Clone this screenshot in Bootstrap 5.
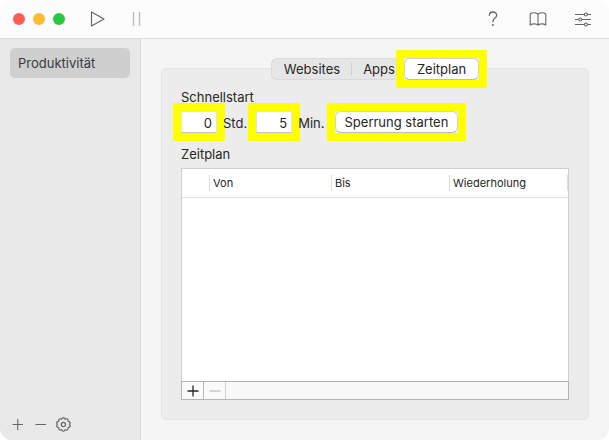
<!DOCTYPE html>
<html lang="de">
<head>
<meta charset="utf-8">
<meta name="viewport" content="width=device-width, initial-scale=1">
<title>Produktivität</title>
<link href="https://cdn.jsdelivr.net/npm/bootstrap@5.3.0/dist/css/bootstrap.min.css" rel="stylesheet">
<style>
body { font-family: Inter, "Liberation Sans", sans-serif; font-size: 13px; line-height: 18px; color: #262626; background: #fff; }
button { font: inherit; color: inherit; }
.app-window { border-radius: 12px; background: #f5f5f5; }
.toolbar { height: 39px; background: #fcfcfc; border-bottom: 1px solid #dcdcdc; padding: 0 17px 0 13px; }
.toolbar-end { gap: 27px; }
.light { width: 12px; height: 12px; border-radius: 50%; }
.light-close { background: #ff5f57; }
.light-min { background: #febc2e; }
.light-max { background: #28c840; }
.icon-btn { background: none; border: 0; padding: 0; color: #666; display: flex; }
.sidebar { width: 141px; background: #e8e8e8; border-right: 1px solid #d8d8d8; padding: 9px 10px 8px; }
.side-item { height: 30px; border-radius: 5px; background: #cfcfcf; color: #3a3a3a; padding: 6px 8px; text-decoration: none; }
.content-pane { padding: 29px 20px 20px; }
.group-box { background: #ececec; border: 1px solid #e4e4e4; border-radius: 5px; padding: 0 19px 19px; }
.segments { height: 22px; margin-top: -11px; border-radius: 6px; background: #e6e6e6; box-shadow: inset 0 0 0 1px #dadada; }
.segment { border: 0; background: none; padding: 0 11px 0 13px; height: 22px; line-height: 20px; }
.segment-apps { padding: 0 9px 0 11px; }
.divider { width: 1px; height: 12px; background: #cfcfcf; }
.marked { display: flex; background: #ececec; box-shadow: 0 0 0 8px #ff0; }
.raised { border: 1px solid #d2d2d2; border-bottom-color: #bdbdbd; border-radius: 6px; background: #fff; height: 22px; line-height: 19px; padding: 0 12px; }
.raised-start { padding: 0 9px; }
.num { width: 36px; height: 22px; border: 1px solid #e3e3e3; border-bottom-color: #c4c4c4; background: #fff; text-align: right; padding: 2px 4px 0 0; font: inherit; color: inherit; border-radius: 0; }
.start-row { height: 22px; margin-top: 5px; }
.unit { margin-left: 6px; margin-right: 9px; padding-top: 2px; }
.unit-min { margin-right: 10px; }
.schedule { margin-top: 5px; background: #fff; border: 1px solid #d0d0d0; border-bottom: 0; }
.head-table { width: 100%; table-layout: fixed; font-size: 11px; line-height: 16px; }
.head-table th { font-weight: 400; height: 28px; padding: 0; border-bottom: 1px solid #e2e2e2; }
.head-table th span { display: block; height: 16px; border-right: 1px solid #dedede; padding-left: 3px; }
.c-mark { width: 28px; } .c-bis { width: 118px; } .c-rep { width: 118px; } .c-von { width: auto; }
.list-tools { height: 19px; border: 1px solid #b4b4b4; background: #f8f8f8; }
.tool-btn { width: 22px; border: 0; border-right: 1px solid #b9b9b9; background: #fafafa; padding: 0; display: flex; align-items: center; justify-content: center; }
.tool-btn:disabled { color: #b0b0b0; border-right-color: #d0d0d0; }
</style>
<script src="https://cdn.jsdelivr.net/npm/bootstrap@5.3.0/dist/js/bootstrap.bundle.min.js" defer></script>
</head>
<body>
<div class="app-window d-flex flex-column min-vh-100 overflow-hidden">
  <header class="toolbar d-flex align-items-center">
    <div class="d-flex gap-2">
      <span class="light light-close"></span><span class="light light-min"></span><span class="light light-max"></span>
    </div>
    <div class="d-flex align-items-center ms-4 gap-4">
      <button class="icon-btn" type="button" aria-label="Start"><svg width="18" height="18" viewBox="0 0 18 18" fill="none" stroke="currentColor" stroke-width="1.2" stroke-linejoin="round"><path d="M2.500 2 L15 9 L2.500 16Z"/></svg></button>
      <button class="icon-btn" type="button" aria-label="Pause"><svg width="14" height="18" viewBox="0 0 14 18" stroke="#bcbcbc" stroke-width="1.4"><path d="M2.500 2V16M8.500 2V16"/></svg></button>
    </div>
    <div class="toolbar-end d-flex align-items-center ms-auto">
      <button class="icon-btn" type="button" aria-label="Hilfe"><svg width="18" height="18" viewBox="0 0 18 18" fill="none" stroke="currentColor" stroke-width="1.3" stroke-linecap="round"><path d="M5.300 5.200C5.400 3.200 6.900 2 9 2C11.300 2 12.700 3.300 12.700 5.200C12.700 8.200 8.900 8 8.900 11.500"/><circle cx="8.900" cy="15" r="1" fill="currentColor" stroke="none"/></svg></button>
      <button class="icon-btn" type="button" aria-label="Handbuch"><svg width="18" height="18" viewBox="0 0 18 18" fill="none" stroke="currentColor" stroke-width="1.1" stroke-linejoin="round"><path d="M9 4.500C8.200 2.200 3 2.200 1.200 4V15C3.200 13.500 7.700 13.500 9 15.200C10.300 13.500 14.800 13.500 16.800 15V4C15 2.200 9.800 2.200 9 4.500ZV15"/></svg></button>
      <button class="icon-btn" type="button" aria-label="Einstellungen"><svg width="18" height="18" viewBox="0 0 18 18" fill="none" stroke="currentColor" stroke-width="1.1"><path d="M1 4.500H10.300M13.500 4.500H17M1 9.500H4.700M7.900 9.500H17M1 14.500H10.300M13.500 14.500H17"/><circle cx="11.900" cy="4.500" r="1.500"/><circle cx="6.300" cy="9.500" r="1.500"/><circle cx="11.900" cy="14.500" r="1.500"/></svg></button>
    </div>
  </header>
  <div class="d-flex flex-grow-1">
    <nav class="sidebar d-flex flex-column flex-shrink-0">
      <a class="side-item" href="#">Produktivität</a>
      <div class="d-flex mt-auto gap-2">
        <button class="icon-btn" type="button" aria-label="Hinzufügen"><svg width="15" height="16" viewBox="0 0 15 16" stroke="currentColor" stroke-width="1.1"><path d="M2.500 8.500H13M7.750 3V14"/></svg></button>
        <button class="icon-btn" type="button" aria-label="Entfernen"><svg width="15" height="16" viewBox="0 0 15 16" stroke="currentColor" stroke-width="1.100"><path d="M2.500 8.500H13"/></svg></button>
        <button class="icon-btn" type="button" aria-label="Optionen"><svg width="16" height="16" viewBox="0 0 16 16" fill="none" stroke="currentColor" stroke-width="1.2" stroke-linejoin="round"><g transform="translate(-.6 .4)"><path d="M6.300 2.700Q8 -.4 9.700 2.700Q12.900 1.500 12.600 4.700Q16 5.500 14 8Q16 10.500 12.600 11.300Q12.900 14.500 9.700 13.300Q8 16.400 6.300 13.300Q3.100 14.500 3.400 11.300Q0 10.500 2 8Q0 5.500 3.400 4.700Q3.100 1.500 6.300 2.700Z"/><circle cx="8" cy="8" r="2.100"/></g></svg></button>
      </div>
    </nav>
    <main class="content-pane d-flex flex-column flex-grow-1">
      <section class="group-box d-flex flex-column flex-grow-1">
        <div class="segments d-flex align-items-center align-self-center" role="tablist">
          <button class="segment" type="button" role="tab">Websites</button>
          <span class="divider"></span>
          <button class="segment segment-apps" type="button" role="tab">Apps</button>
          <span class="marked"><button class="raised" type="button" role="tab" aria-selected="true">Zeitplan</button></span>
        </div>
        <div class="mt-2">Schnellstart</div>
        <div class="start-row d-flex align-items-center">
          <span class="marked"><input class="num" id="hours" type="text" value="0"></span>
          <label class="unit" for="hours">Std.</label>
          <span class="marked"><input class="num" id="minutes" type="text" value="5"></span>
          <label class="unit unit-min" for="minutes">Min.</label>
          <span class="marked"><button class="raised raised-start" type="button">Sperrung starten</button></span>
        </div>
        <div class="mt-2 pt-1">Zeitplan</div>
        <div class="schedule flex-grow-1">
          <table class="head-table">
            <thead><tr>
              <th class="c-mark"><span></span></th>
              <th class="c-von"><span>Von</span></th>
              <th class="c-bis"><span>Bis</span></th>
              <th class="c-rep"><span>Wiederholung</span></th>
            </tr></thead>
          </table>
        </div>
        <div class="list-tools d-flex">
          <button class="tool-btn" type="button" aria-label="Zeitplan hinzufügen"><svg width="12" height="12" viewBox="0 0 12 12" stroke="currentColor" stroke-width="1.300"><path d="M.5 6H11.500M6 .5V11.500"/></svg></button>
          <button class="tool-btn" type="button" aria-label="Zeitplan entfernen" disabled><svg width="12" height="12" viewBox="0 0 12 12" stroke="currentColor" stroke-width="1.200"><path d="M.5 6H11.500"/></svg></button>
        </div>
      </section>
    </main>
  </div>
</div>
</body>
</html>
